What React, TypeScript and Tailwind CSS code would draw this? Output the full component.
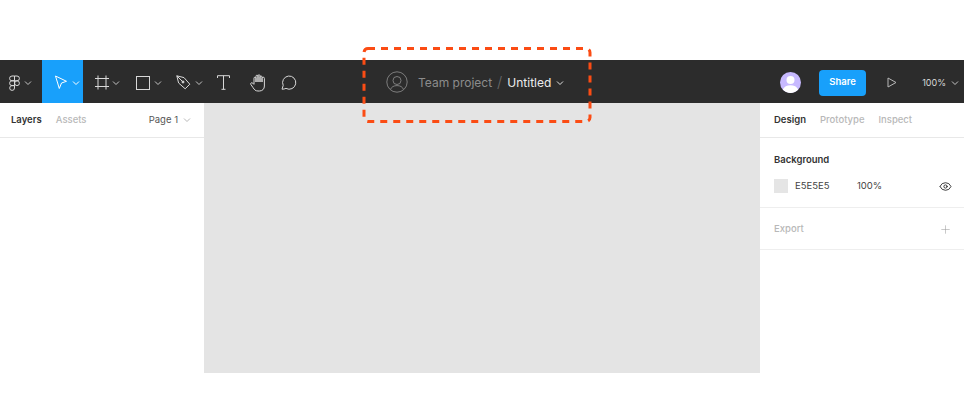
import { Eye, Plus } from "lucide-react";

const font = { fontFamily: "Inter, 'Liberation Sans', sans-serif" };

function Chevron({ className = "text-[#c4c4c4]" }: { className?: string }) {
  return (
    <svg width="8" height="6" viewBox="0 0 8 6" fill="none" className={className}>
      <path d="M1 1.5 4 4.5 7 1.5" stroke="currentColor" strokeWidth="1" />
    </svg>
  );
}

function FigmaIcon() {
  return (
    <svg width="11" height="16" viewBox="0 0 11 16" fill="none" stroke="#d8d8d8" strokeWidth="1">
      <path d="M5.5 1H3a2.4 2.4 0 0 0 0 4.8h2.5V1Z" />
      <path d="M5.5 1H8a2.4 2.4 0 0 1 0 4.8H5.5V1Z" />
      <path d="M5.5 5.8H3a2.4 2.4 0 0 0 0 4.8h2.5V5.8Z" />
      <circle cx="8" cy="8.2" r="2.4" />
      <path d="M5.5 10.6H3a2.4 2.4 0 1 0 2.5 2.4v-2.4Z" />
    </svg>
  );
}

function MoveIcon() {
  return (
    <svg width="14" height="15" viewBox="0 0 14 15" fill="none" stroke="#ffffff" strokeWidth="1">
      <path d="M1.5 1 12.5 6.3 7.5 8 5.3 13.5 1.5 1Z" />
    </svg>
  );
}

function FrameIcon() {
  return (
    <svg width="14" height="15" viewBox="0 0 14 15" fill="none" stroke="#d8d8d8" strokeWidth="1">
      <path d="M3 .5v14M11 .5v14M0 3.5h14M0 11.5h14" />
    </svg>
  );
}

function PenIcon() {
  return (
    <svg width="15" height="15" viewBox="0 0 15 15" fill="none" stroke="#d8d8d8" strokeWidth="1">
      <path d="M.8.8 8 2.6l5.8 6.6-4.6 4.6L2.6 8 .8.8Z" />
      <path d="M.8.8 6.4 6.4" />
      <circle cx="7" cy="7" r="1" fill="#d8d8d8" />
    </svg>
  );
}

function TextIcon() {
  return (
    <svg width="13" height="15" viewBox="0 0 13 15" fill="none" stroke="#d8d8d8" strokeWidth="1">
      <path d="M.5 3V.7h12V3M6.5.7v13.6M4.5 14.3h4" />
    </svg>
  );
}

function HandIcon() {
  return (
    <svg width="16" height="18" viewBox="0 0 16 18" fill="none" stroke="#d8d8d8" strokeWidth="1" strokeLinejoin="round">
      <path d="M4 10V4.2a1 1 0 0 1 2 0V8M6 8V2.2a1 1 0 0 1 2 0V8M8 8V1.8a1 1 0 0 1 2 0V8M10 8V3a1 1 0 0 1 2 0v5M12 8V4.4a1 1 0 0 1 2.4 0V12c0 3-2 5-5 5H8c-2.5 0-3.6-1.2-5-3.4L.8 10.4c-.7-1.2 1-2.4 2-1.2L4 10.6" />
    </svg>
  );
}

function CommentIcon() {
  return (
    <svg width="16" height="15" viewBox="0 0 16 15" fill="none" stroke="#d8d8d8" strokeWidth="1">
      <path d="M1 14.2 2.2 10.4A6.6 6.6 0 1 1 5 13.4c-1.2.6-2.6.8-4 .8Z" />
    </svg>
  );
}

function TeamAvatar() {
  return (
    <svg width="22" height="22" viewBox="0 0 22 22" fill="none" stroke="#7d7d7d" strokeWidth="1">
      <circle cx="11" cy="11" r="10.2" />
      <circle cx="11" cy="9.5" r="4" />
      <path d="M4.5 18.4c1-2.6 3.4-3.8 6.5-3.8s5.5 1.2 6.5 3.8" />
    </svg>
  );
}

function UserAvatar() {
  return (
    <svg width="21" height="21" viewBox="0 0 21 21">
      <circle cx="10.5" cy="10.5" r="10.5" fill="#c7b9ff" />
      <circle cx="10.5" cy="8" r="4" fill="#ffffff" />
      <path d="M2.8 17.6c1.2-3 4.2-4.4 7.7-4.4s6.5 1.4 7.7 4.4a10.5 10.5 0 0 1-15.4 0Z" fill="#ffffff" />
    </svg>
  );
}

export default function App() {
  return (
    <div className="relative h-[411px] w-[966px] overflow-hidden bg-white pt-[60px] pr-[2px]" style={font}>
      {/* toolbar */}
      <div className="flex h-[43px] items-center justify-between bg-[#2c2c2c]">
        <div className="flex h-full items-center">
          <div className="flex w-[42px] items-center gap-[4px] pt-[2px] pl-[9px]">
            <FigmaIcon />
            <Chevron />
          </div>
          <div className="flex h-full w-[41px] items-center gap-[4px] bg-[#18a0fb] pt-[2px] pl-[12px]">
            <MoveIcon />
            <Chevron className="text-white" />
          </div>
          <div className="flex w-[41px] items-center gap-[3px] pt-[2px] pl-[12px]">
            <FrameIcon />
            <Chevron />
          </div>
          <div className="flex w-[41px] items-center gap-[4px] pt-[2px] pl-[12px]">
            <span className="block h-[14px] w-[14px] border border-[#d8d8d8]" />
            <Chevron />
          </div>
          <div className="flex w-[44px] items-center gap-[4px] pt-[2px] pl-[11px]">
            <PenIcon />
            <Chevron />
          </div>
          <div className="flex w-[37px] items-center pt-[2px] pl-[8px]">
            <TextIcon />
          </div>
          <div className="flex w-[34px] items-center pt-[2px] pl-[4px]">
            <HandIcon />
          </div>
          <div className="ml-[1px] flex pt-[2px]">
            <CommentIcon />
          </div>
        </div>

        <div className="flex h-full items-center pt-[2px] pr-[5px]">
          <UserAvatar />
          <button className="ml-[18px] h-[26px] w-[47px] rounded-[4px] bg-[#18a0fb] text-[9.5px] font-semibold text-white">
            Share
          </button>
          <svg width="10" height="11" viewBox="0 0 10 11" fill="none" stroke="#b8b8b8" strokeWidth="1" className="ml-[21px]">
            <path d="M1 1 9 5.5 1 10V1Z" />
          </svg>
          <span className="ml-[25px] text-[9px] text-[#d8d8d8]">100%</span>
          <span className="ml-[5px] flex">
            <Chevron />
          </span>
        </div>
      </div>

      {/* body */}
      <div className="flex h-[270px]">
        <aside className="w-[204px] shrink-0">
          <div className="flex h-[35px] items-center border-b border-[#e8e8e8] pr-[13px] pl-[11px] text-[9.5px]">
            <span className="font-semibold text-[#333333]">Layers</span>
            <span className="ml-[14px] font-medium text-[#b8b8b8]">Assets</span>
            <span className="ml-auto text-[#555555]">Page 1</span>
            <span className="ml-[5px] flex">
              <Chevron className="text-[#b8b8b8]" />
            </span>
          </div>
        </aside>

        <main className="flex-1 bg-[#e4e4e4]" />

        <aside className="w-[204px] shrink-0">
          <div className="flex h-[35px] items-center gap-[14px] border-b border-[#e8e8e8] pl-[14px] text-[9.5px]">
            <span className="font-semibold text-[#333333]">Design</span>
            <span className="font-medium text-[#b8b8b8]">Prototype</span>
            <span className="font-medium text-[#b8b8b8]">Inspect</span>
          </div>
          <div className="h-[70px] border-b border-[#eeeeee] px-[14px] pt-[15px]">
            <div className="text-[9.5px] leading-[13px] font-semibold text-[#333333]">Background</div>
            <div className="mt-[13px] flex items-center text-[9.5px] text-[#444444]">
              <span className="h-[14px] w-[14px] bg-[#e5e5e5]" />
              <span className="ml-[7px] w-[62px]">E5E5E5</span>
              <span>100%</span>
              <Eye size={13} strokeWidth={1.6} className="mt-px ml-auto -mr-[2px] text-[#222222]" />
            </div>
          </div>
          <div className="flex h-[42px] items-center justify-between border-b border-[#eeeeee] pt-px pr-[12px] pl-[14px]">
            <span className="text-[9.5px] font-medium text-[#b8b8b8]">Export</span>
            <Plus size={13} strokeWidth={1} className="text-[#9a9a9a]" />
          </div>
        </aside>
      </div>

      {/* team project label + annotation on top of the toolbar */}
      <div className="absolute top-[71px] left-[386px] flex h-[22px] items-center">
        <TeamAvatar />
        <span className="mt-px ml-[10px] text-[12px] text-[#8c8c8c]">Team project</span>
        <span className="ml-[5px] text-[15px] font-light text-[#6a6a6a]">/</span>
        <span className="mt-px ml-[5px] text-[12px] text-[#ececec]">Untitled</span>
        <span className="mt-px ml-[5px] flex">
          <Chevron className="text-[#e0e0e0]" />
        </span>
      </div>
      <svg width="232" height="80" viewBox="0 0 232 80" fill="none" className="absolute top-[45px] left-[361px]">
        <rect x="3" y="3.5" width="226" height="73" rx="4" stroke="#fb4c14" strokeWidth="3" strokeDasharray="7 6" />
      </svg>
    </div>
  );
}
